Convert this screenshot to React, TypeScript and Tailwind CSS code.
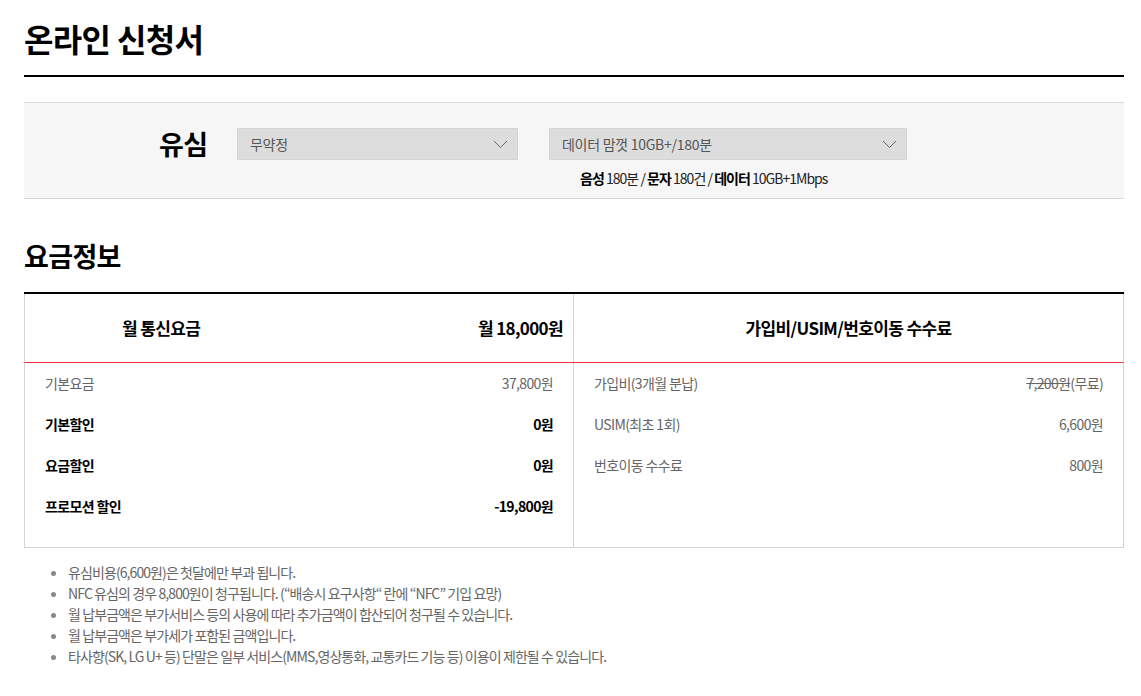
const FONT = "font-['Noto_Sans_CJK_KR','Noto_Sans',sans-serif]";

const monthly = [
  { label: '기본요금', value: '37,800원', strong: false },
  { label: '기본할인', value: '0원', strong: true },
  { label: '요금할인', value: '0원', strong: true },
  { label: '프로모션 할인', value: '-19,800원', strong: true },
];

const notes = [
  '유심비용(6,600원)은 첫달에만 부과 됩니다.',
  'NFC 유심의 경우 8,800원이 청구됩니다. (“배송시 요구사항“ 란에 “NFC” 기입 요망)',
  '월 납부금액은 부가서비스 등의 사용에 따라 추가금액이 합산되어 청구될 수 있습니다.',
  '월 납부금액은 부가세가 포함된 금액입니다.',
  '타사향(SK, LG U+ 등) 단말은 일부 서비스(MMS,영상통화, 교통카드 기능 등) 이용이 제한될 수 있습니다.',
];

function Select({ value, width }: { value: string; width: string }) {
  return (
    <div className={`flex h-[32px] ${width} items-center justify-between border border-[#d4d4d4] bg-[#dddddd] pl-[12px] pr-[9px] text-[14px] tracking-[-0.02em] text-[#555]`}>
      <span>{value}</span>
      <svg width="15" height="9" viewBox="0 0 15 9" fill="none" className="text-[#666]">
        <path d="M1 1l6.5 6.5L14 1" stroke="currentColor" strokeWidth="1" />
      </svg>
    </div>
  );
}

export default function App() {
  return (
    <div className={`${FONT} min-h-[696px] bg-white px-[24px] pr-[17px] tracking-[-0.04em] text-black`}>
      <h1 className="pt-[16px] pb-[15px] text-[32px] font-bold leading-[44px]">온라인 신청서</h1>
      <div className="h-[2px] bg-black" />

      <div className="mt-[25px] border-y border-[#d8d8d8] bg-[#f6f6f6] pt-[25px] pb-[11px]">
        <div className="flex items-center">
          <div className="w-[213px] pl-[135px] text-[27px] font-bold leading-[32px]">유심</div>
          <Select value="무약정" width="w-[281px]" />
          <div className="w-[31px]" />
          <Select value="데이터 맘껏 10GB+/180분" width="w-[358px]" />
        </div>
        <div className="mt-[9px] pl-[556px] text-[14px] leading-[18px] tracking-[-0.07em] text-[#222]">
          <b className="text-black">음성</b> 180분 / <b className="text-black">문자</b> 180건 / <b className="text-black">데이터</b> 10GB+1Mbps
        </div>
      </div>

      <h2 className="mt-[39px] text-[27px] font-bold leading-[36px]">요금정보</h2>

      <div className="mt-[18px] border-t-2 border-black">
        <div className="flex h-[69px] border-x border-[#d4d4d4] border-b border-b-[#ee2b3b] text-[17px] font-bold">
          <div className="flex w-[549px] items-center justify-between border-r border-[#d4d4d4] pl-[97px] pr-[10px]">
            <span>월 통신요금</span>
            <span>월 18,000원</span>
          </div>
          <div className="flex flex-1 items-center justify-center">가입비/USIM/번호이동 수수료</div>
        </div>
        <div className="flex h-[185px] border-x border-b border-[#d4d4d4] text-[14px]">
          <div className="w-[549px] border-r border-[#d4d4d4] px-[20px]">
            {monthly.map((r) => (
              <div
                key={r.label}
                className={`flex h-[41px] items-center justify-between ${r.strong ? 'font-bold text-black' : 'text-[#666]'}`}
              >
                <span>{r.label}</span>
                <span>{r.value}</span>
              </div>
            ))}
          </div>
          <div className="flex-1 px-[20px] text-[#666]">
            <div className="flex h-[41px] items-center justify-between">
              <span>가입비(3개월 분납)</span>
              <span>
                <span className="line-through">7,200원</span>(무료)
              </span>
            </div>
            <div className="flex h-[41px] items-center justify-between">
              <span>USIM(최초 1회)</span>
              <span>6,600원</span>
            </div>
            <div className="flex h-[41px] items-center justify-between">
              <span>번호이동 수수료</span>
              <span>800원</span>
            </div>
          </div>
        </div>
      </div>

      <ul className="mt-[14px] pl-[44px] text-[14px] leading-[21px] tracking-[-0.065em] text-[#666]">
        {notes.map((n) => (
          <li key={n} className="list-disc marker:text-[#888]">
            {n}
          </li>
        ))}
      </ul>
    </div>
  );
}
